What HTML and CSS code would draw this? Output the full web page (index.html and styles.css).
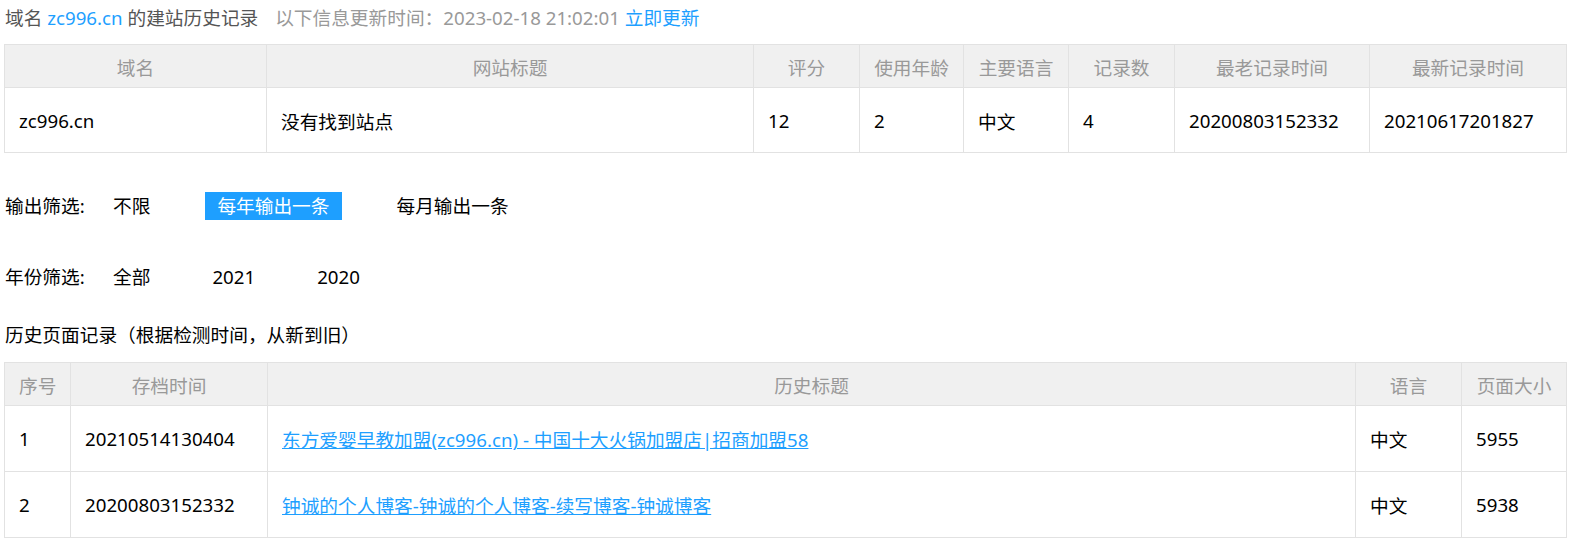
FILE: index.html
```html
<!DOCTYPE html>
<html lang="zh-CN">
<head>
  <meta charset="UTF-8">
  <meta name="viewport" content="width=device-width, initial-scale=1.0">
  <title>zc996.cn 的建站历史记录</title>
  <link rel="stylesheet" href="styles.css">
</head>
<body>
  <div class="page">
    <div class="title-line">
      域名 <a href="#">zc996.cn</a> 的建站历史记录
      <span class="update">以下信息更新时间：2023-02-18 21:02:01</span>
      <a href="#">立即更新</a>
    </div>

    <table class="grid summary">
      <colgroup>
        <col style="width:262px"><col style="width:487px"><col style="width:106px"><col style="width:104px">
        <col style="width:105px"><col style="width:106px"><col style="width:195px"><col style="width:197px">
      </colgroup>
      <thead>
        <tr>
          <th>域名</th><th>网站标题</th><th>评分</th><th>使用年龄</th>
          <th>主要语言</th><th>记录数</th><th>最老记录时间</th><th>最新记录时间</th>
        </tr>
      </thead>
      <tbody>
        <tr>
          <td>zc996.cn</td><td>没有找到站点</td><td>12</td><td>2</td>
          <td>中文</td><td>4</td><td>20200803152332</td><td>20210617201827</td>
        </tr>
      </tbody>
    </table>

    <div class="filters">
      <div class="filter-row">
        <span class="filter-label">输出筛选:</span>
        <a class="opt" href="#">不限</a>
        <a class="opt active" href="#">每年输出一条</a>
        <a class="opt" href="#">每月输出一条</a>
      </div>
      <div class="filter-row years">
        <span class="filter-label">年份筛选:</span>
        <a class="opt" href="#">全部</a>
        <a class="opt" href="#">2021</a>
        <a class="opt" href="#">2020</a>
      </div>
    </div>

    <div class="section-title">历史页面记录（根据检测时间，从新到旧）</div>

    <table class="grid history">
      <colgroup>
        <col style="width:66px"><col style="width:197px"><col style="width:1088px">
        <col style="width:106px"><col style="width:105px">
      </colgroup>
      <thead>
        <tr><th>序号</th><th>存档时间</th><th>历史标题</th><th>语言</th><th>页面大小</th></tr>
      </thead>
      <tbody>
        <tr>
          <td>1</td><td>20210514130404</td>
          <td><a class="hist-link" href="#">东方爱婴早教加盟(zc996.cn) - 中国十大火锅加盟店|招商加盟58</a></td>
          <td>中文</td><td>5955</td>
        </tr>
        <tr>
          <td>2</td><td>20200803152332</td>
          <td><a class="hist-link" href="#">钟诚的个人博客-钟诚的个人博客-续写博客-钟诚博客</a></td>
          <td>中文</td><td>5938</td>
        </tr>
      </tbody>
    </table>
  </div>
</body>
</html>
```

FILE: styles.css
```css
body {
  margin: 0;
  padding: 0;
  background-color: #FFFFFF;
  color: #000000;
  font-family: "Noto Sans", "Noto Sans CJK SC", sans-serif;
  font-size: 18.7px;
}

a {
  color: #1E9FFF;
  text-decoration: none;
}

.page {
  margin: 0 7px 0 4px;
}

.title-line {
  height: 36px;
  line-height: 36px;
  color: #555555;
  padding-left: 1px;
}

.update {
  color: #999999;
  margin-left: 12px;
}

.grid {
  width: 1562px;
  border-collapse: collapse;
  table-layout: fixed;
}

.grid th,
.grid td {
  border: 1px solid #E2E2E2;
  padding: 0 14px;
  font-weight: normal;
  white-space: nowrap;
}

.grid th {
  height: 42px;
  background-color: #F0F0F0;
  color: #999999;
  text-align: center;
}

.grid td {
  height: 64px;
  text-align: left;
}

.history td {
  height: 65px;
}

.summary {
  margin-top: 8px;
}

.filters {
  padding-top: 39px;
}

.filter-row {
  display: flex;
  align-items: center;
  height: 28px;
  line-height: 28px;
}

.filter-row + .filter-row {
  margin-top: 43px;
}

.filter-label {
  width: 96px;
  padding-left: 1px;
}

.opt {
  color: #000000;
  padding: 0 12px;
  margin-right: 43px;
}

.years .opt {
  margin-right: 38px;
}

.opt.active {
  background-color: #1E9FFF;
  color: #FFFFFF;
}

.section-title {
  margin-top: 30px;
  height: 28px;
  line-height: 28px;
  padding-left: 1px;
}

.history {
  margin-top: 13px;
}

.hist-link {
  text-decoration: underline;
}
```
